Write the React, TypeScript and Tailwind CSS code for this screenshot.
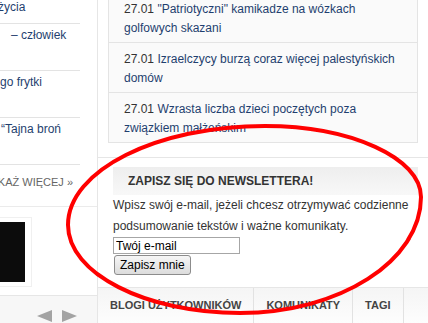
import React from "react";

const news = [
  { date: "27.01", title: "\"Patriotyczni\" kamikadze na wózkach golfowych skazani" },
  { date: "27.01", title: "Izraelczycy burzą coraz więcej palestyńskich domów" },
  { date: "27.01", title: "Wzrasta liczba dzieci poczętych poza związkiem małżeńskim" },
];

const sideItems = [
  { text: "życia", pad: "pl-0 -ml-[2px]", last: true },
  { text: "– człowiek", pad: "pl-[11px]", last: false },
  { text: "go frytki", pad: "pl-0", last: false },
  { text: "“Tajna broń", pad: "pl-[1px]", last: false },
];

const tabs = ["BLOGI UŻYTKOWNIKÓW", "KOMUNIKATY", "TAGI"];

function Arrow({ dir }: { dir: "left" | "right" }) {
  return (
    <svg width="15" height="12" viewBox="0 0 15 12">
      {dir === "left" ? (
        <polygon points="0,6 15,0 15,12" fill="#a3a3a3" />
      ) : (
        <polygon points="15,6 0,0 0,12" fill="#a3a3a3" />
      )}
    </svg>
  );
}

export default function App() {
  return (
    <div className="relative w-[428px] h-[323px] overflow-hidden bg-white font-['Liberation_Sans',Arial,sans-serif]">
      <div className="flex h-full">
        {/* left column */}
        <div className="w-[98px] shrink-0 border-r border-[#e6e6e6] flex flex-col">
          <div className="w-[80px] -mt-[23px]">
            {sideItems.map((it, i) => (
              <div
                key={i}
                className="h-[47px] border-b border-[#e3e3e3] pt-[2px] text-[12px] leading-[19px] text-[#1f3f6f] whitespace-nowrap overflow-hidden"
              >
                {it.last && <div className="h-[19px]" />}
                <div className={it.pad}>{it.text}</div>
              </div>
            ))}
          </div>
          <div className="w-[80px] h-[41px] flex items-start justify-end pt-[9px] pr-[7px] overflow-hidden whitespace-nowrap text-[11px] text-[#666]">
            POKAŻ WIĘCEJ »
          </div>
          <div className="border-t border-[#ebebeb] h-[89px]">
            <div className="mt-[10px] w-[32px] h-[70px] border border-l-0 border-[#f0f0f0] py-[4px] pr-[6px]">
              <div className="w-full h-full bg-[#0c0c0c] bg-[radial-gradient(#3c3c3c_0.6px,transparent_0.7px)] bg-[length:2px_2px]" />
            </div>
          </div>
          <div className="flex-1 border-t border-[#e6e6e6] bg-[#f7f7f7] flex justify-end gap-[10px] pr-[20px] pt-[14px]">
            <Arrow dir="left" />
            <Arrow dir="right" />
          </div>
        </div>

        {/* right column */}
        <div className="flex-1 flex flex-col">
          <div className="ml-[10px] w-[310px] -mt-[8px] border border-[#e4e4e4] bg-[#fafafa]">
            {news.map((n, i) => (
              <div
                key={i}
                className={`px-[15px] pt-[7px] pb-[5px] text-[12px] leading-[19px] ${
                  i < news.length - 1 ? "h-[50px] border-b border-[#e4e4e4]" : "h-[49px]"
                }`}
              >
                <span className="text-[#333]">{n.date}</span>{" "}
                <span className="text-[#1f3f6f]">{n.title}</span>
              </div>
            ))}
          </div>

          <div className="mt-[14px] border-t border-[#e6e6e6] pt-[9px] pb-[12px] pl-[15px] pr-[10px]">
            <div className="h-[28px] flex items-center pl-[15px] bg-linear-to-b from-[#eeeeee] to-[#f8f8f8] text-[12px] font-bold text-[#333]">
              ZAPISZ SIĘ DO NEWSLETTERA!
            </div>
            <p className="text-[12px] leading-[21px] text-[#333]">
              Wpisz swój e-mail, jeżeli chcesz otrzymywać codzienne podsumowanie tekstów i ważne komunikaty.
            </p>
            <input
              className="block w-[127px] h-[17px] border border-[#a6a6a6] px-[2px] text-[12px] text-black outline-none"
              defaultValue="Twój e-mail"
              readOnly
            />
            <button className="block mt-[1px] ml-[1px] h-[20px] px-[5px] border border-[#8c8c8c] rounded-[3px] bg-linear-to-b from-[#f6f6f6] to-[#dcdcdc] text-[12px] text-black leading-none">
              Zapisz mnie
            </button>
          </div>

          <div className="flex-1 border-t border-[#e6e6e6] bg-linear-to-b from-[#f5f5f5] to-[#fdfdfd] flex">
            {tabs.map((t) => (
              <div
                key={t}
                className="px-[12px] border-r border-[#e2e2e2] text-[11px] font-bold text-[#444] pt-[9px]"
              >
                {t}
              </div>
            ))}
          </div>
        </div>
      </div>

      {/* red marker circle drawn over the page */}
      <svg
        className="absolute inset-0 pointer-events-none"
        width="428"
        height="323"
        viewBox="0 0 428 323"
      >
        <path
          d="M68 225 C68 170.5 156.7 126 265 126 C350.8 126 421 158 421 197 C421 260.8 339.6 313 240 313 C145.4 313 68 273.4 68 225 Z"
          fill="none"
          stroke="#ff0000"
          strokeWidth="4"
        />
      </svg>
    </div>
  );
}
